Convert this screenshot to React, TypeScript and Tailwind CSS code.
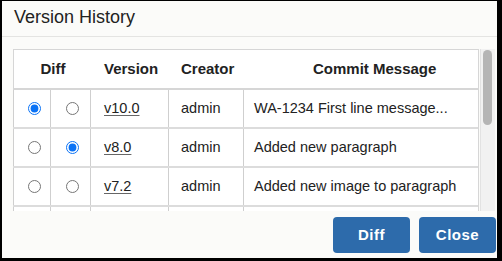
const versions = [
  { from: true, to: false, version: "v10.0", creator: "admin", message: "WA-1234 First line message..." },
  { from: false, to: true, version: "v8.0", creator: "admin", message: "Added new paragraph" },
  { from: false, to: false, version: "v7.2", creator: "admin", message: "Added new image to paragraph" },
];

const cell = "border-l border-[#cfcfcf] flex items-center";
const cols = "grid grid-cols-[37px_40px_78px_75px_1fr]";

const VersionHistory = () => {
  return (
    <div
      className="w-[502px] h-[261px] bg-black pl-[2px] pt-[1px] pr-[5px] pb-[3px]"
      style={{ fontFamily: '"Liberation Sans", Arial, sans-serif' }}
    >
      <div className="w-full h-full bg-[#fbfbf9] flex flex-col">
        <div className="h-[36px] border-b border-[#e4e4e2] px-[12px] flex items-center">
          <h1 className="text-[18px] text-[#222] leading-none pb-[3px]">Version History</h1>
        </div>

        <div className="flex mt-[12px] ml-[11px] h-[162px] overflow-hidden">
          <div className="w-[467px] shrink-0">
            <div className="w-[466px] border-t border-r border-[#d6d6d6] bg-white">
              <div className={cols + " h-[40px] border-b-2 border-[#d6d6d6] border-l border-l-[#d6d6d6] text-[15px] font-bold text-[#222]"}>
                <div className="col-span-2 flex items-center justify-center pl-[1px]">Diff</div>
                <div className="flex items-center pl-[13px]">Version</div>
                <div className="flex items-center pl-[12px]">Creator</div>
                <div className="flex items-center pl-[69px]">Commit Message</div>
              </div>
              {versions.map((row, index) => (
                <div key={index} className={cols + " h-[39px] border-b-2 border-[#dcdcdc] text-[14.5px] text-[#222]"}>
                  <div className={cell + " justify-center pl-[4px]"}>
                    <input type="radio" readOnly checked={row.from} className="w-[13px] h-[13px] m-0 accent-[#0a72f5]" />
                  </div>
                  <div className={cell + " justify-center pl-[4px]"}>
                    <input type="radio" readOnly checked={row.to} className="w-[13px] h-[13px] m-0 accent-[#0a72f5]" />
                  </div>
                  <div className={cell + " pl-[13px]"}>
                    <a href="#" className="underline underline-offset-2 decoration-[#666] text-[#222]">
                      {row.version}
                    </a>
                  </div>
                  <div className={cell + " pl-[12px]"}>{row.creator}</div>
                  <div className={cell + " pl-[10px] whitespace-nowrap"}>{row.message}</div>
                </div>
              ))}
              {/* next row, scrolled out of view */}
              <div className={cols + " h-[39px]"}>
                <div className={cell} />
                <div className={cell} />
                <div className={cell} />
                <div className={cell} />
                <div className={cell} />
              </div>
            </div>
          </div>
          <div className="w-[15px] shrink-0 bg-[#f1f1f1] border-l border-[#e2e2e2] pt-[1px] pl-[2px]">
            <div className="w-[9px] h-[75px] rounded-full bg-[#b5b5b5]" />
          </div>
        </div>

        <div className="flex justify-end gap-[9px] mt-[6px] pr-[1px]">
          <button className="w-[77px] h-[36px] rounded-[4px] bg-[#2d6bab] text-white text-[15px] font-bold tracking-[0.5px]">
            Diff
          </button>
          <button className="w-[77px] h-[36px] rounded-[4px] bg-[#2d6bab] text-white text-[15px] font-bold tracking-[0.5px]">
            Close
          </button>
        </div>
      </div>
    </div>
  );
};

export default function App() {
  return <VersionHistory />;
}
